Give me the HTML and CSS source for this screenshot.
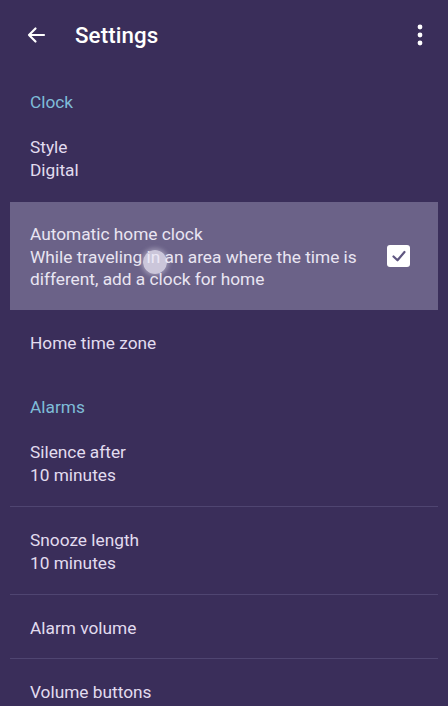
FILE: index.html
```html
<!DOCTYPE html>
<html>
<head>
<meta charset="utf-8">
<link rel="stylesheet" href="styles.css">
</head>
<body>
<div class="screen">
  <header class="appbar">
    <svg class="back" width="24" height="24" viewBox="0 0 24 24"><path d="M20 12H5M11.5 5.5L5 12l6.5 6.5" fill="none" stroke="#fff" stroke-width="2.2" stroke-linecap="round" stroke-linejoin="round"/></svg>
    <h1 class="title">Settings</h1>
    <svg class="more" width="8" height="24" viewBox="0 0 8 24"><circle cx="4" cy="4" r="2.4" fill="#fff"/><circle cx="4" cy="12" r="2.4" fill="#fff"/><circle cx="4" cy="20" r="2.4" fill="#fff"/></svg>
  </header>

  <div class="category">Clock</div>
  <div class="item">
    <div class="item-title">Style</div>
    <div class="item-summary">Digital</div>
  </div>
  <div class="item item-pressed">
    <div class="item-text">
      <div class="item-title">Automatic home clock</div>
      <div class="item-summary">While traveling in an area where the time is different, add a clock for home</div>
    </div>
    <div class="checkbox">
      <svg width="16" height="14" viewBox="0 0 16 14"><path d="M2.5 7.5l4 3.8L13.5 3" fill="none" stroke="#5f5680" stroke-width="2.2" stroke-linecap="round" stroke-linejoin="round"/></svg>
    </div>
    <span class="ripple"></span>
  </div>
  <div class="item item-single">
    <div class="item-title">Home time zone</div>
  </div>

  <div class="category category-next">Alarms</div>
  <div class="item">
    <div class="item-title">Silence after</div>
    <div class="item-summary">10 minutes</div>
  </div>
  <div class="divider"></div>
  <div class="item">
    <div class="item-title">Snooze length</div>
    <div class="item-summary">10 minutes</div>
  </div>
  <div class="divider"></div>
  <div class="item item-single">
    <div class="item-title">Alarm volume</div>
  </div>
  <div class="divider"></div>
  <div class="item item-single">
    <div class="item-title">Volume buttons</div>
  </div>
</div>
</body>
</html>
```

FILE: styles.css
```css
* { box-sizing: border-box; }
html, body {
  margin: 0;
  padding: 0;
  background: #3a2e5a;
}
body {
  font-family: Roboto, "Noto Sans", sans-serif;
  color: #e2dcef;
  width: 448px;
  height: 706px;
  overflow: hidden;
}
.screen {
  display: flex;
  flex-direction: column;
}
.appbar {
  height: 70px;
  display: flex;
  align-items: center;
  padding: 0 24px 0 24px;
}
.back { flex: none; margin-right: 27px; }
.title {
  margin: 0;
  flex: 1;
  font-size: 22.3px;
  font-weight: 500;
  color: #ffffff;
  letter-spacing: 0.1px;
}
.more { flex: none; }
.category {
  padding: 20px 30px 0;
  line-height: 24px;
  font-size: 17.3px;
  color: #7fbcd8;
}
.category-next { padding-top: 22px; }
.item {
  padding: 21px 30px 20px;
  font-size: 17.3px;
}
.item-title { line-height: 24px; color: #e2dcef; }
.item-summary { line-height: 22px; color: #e2dcef; }
.item-single { padding-bottom: 18px; }
.item-pressed {
  position: relative;
  margin: 1px 10px 0;
  padding: 20px 28px 20px 20px;
  background: #6b6288;
  display: flex;
  align-items: center;
  gap: 20px;
}
.item-pressed .item-title,
.item-pressed .item-summary { color: #e9e5f2; }
.item-text { flex: 1; }
.checkbox {
  flex: none;
  width: 23px;
  height: 22px;
  border-radius: 3px;
  background: #ffffff;
  display: flex;
  align-items: center;
  justify-content: center;
}
.ripple {
  position: absolute;
  left: 133px;
  top: 48px;
  width: 24px;
  height: 24px;
  border-radius: 50%;
  background: rgba(235, 232, 245, 0.75);
  box-shadow: 0 0 4px 2px rgba(235, 232, 245, 0.35);
}
.divider {
  height: 1px;
  margin: 0 10px;
  background: #4f4571;
}
```
